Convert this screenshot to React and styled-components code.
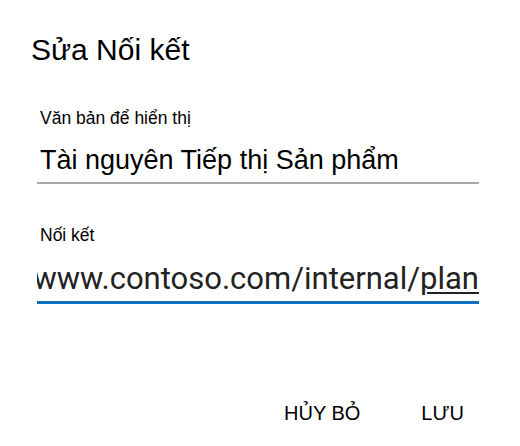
import styled, { createGlobalStyle } from "styled-components"

const GlobalStyle = createGlobalStyle`
  html, body {
    margin: 0;
    padding: 0;
    background: #fff;
  }
  body {
    font-family: "Liberation Sans", Arial, sans-serif;
    color: #000;
  }
`

function App() {
  return (
    <>
      <GlobalStyle />
      <Dialog>
        <Title>Sửa Nối kết</Title>
        <Form>
          <Field>
            <Label>Văn bản để hiển thị</Label>
            <Value>Tài nguyên Tiếp thị Sản phẩm</Value>
          </Field>
          <Field>
            <Label>Nối kết</Label>
            <Value $focused>
              <UrlText>
                www.contoso.com/internal/<Marked>plan</Marked>
              </UrlText>
            </Value>
          </Field>
        </Form>
        <Actions>
          <TextButton type="button">HỦY BỎ</TextButton>
          <TextButton type="button">LƯU</TextButton>
        </Actions>
      </Dialog>
    </>
  )
}

const Dialog = styled.div`
  width: 520px;
  height: 446px;
  box-sizing: border-box;
  padding: 32px 41px 0 31px;
  display: flex;
  flex-direction: column;
`

const Title = styled.h1`
  margin: 0;
  font-size: 30px;
  line-height: 36px;
  font-weight: 400;
  color: #000;
`

const Form = styled.div`
  margin: 39px 0 0 6px;
  display: flex;
  flex-direction: column;
  gap: 40px;
`

const Field = styled.div`
  display: flex;
  flex-direction: column;
  gap: 15px;
`

const Label = styled.div`
  padding-left: 3px;
  font-size: 17.5px;
  line-height: 22px;
  color: #000;
`

const Value = styled.div`
  display: flex;
  justify-content: ${p => (p.$focused ? "flex-end" : "flex-start")};
  overflow: hidden;
  white-space: nowrap;
  padding: 0 0 ${p => (p.$focused ? "4px" : "6px")} 3px;
  font-size: 27px;
  line-height: 32px;
  color: #000;
  border-bottom: ${p => (p.$focused ? "3px solid #1170c2" : "2px solid #a9a9a9")};
`

const UrlText = styled.span`
  font-family: Roboto, "Liberation Sans", sans-serif;
  font-size: 31px;
  line-height: 36px;
  color: #222;
`

const Marked = styled.span`
  text-decoration: underline;
  text-decoration-thickness: 2px;
  text-underline-offset: 3px;
`

const Actions = styled.div`
  margin-top: 89px;
  display: flex;
  justify-content: flex-end;
  gap: 31px;
`

const TextButton = styled.button`
  background: none;
  border: none;
  padding: 8px 15px;
  font-family: "Liberation Sans", Arial, sans-serif;
  font-size: 20px;
  line-height: 24px;
  color: #000;
  cursor: pointer;
`

export default App
